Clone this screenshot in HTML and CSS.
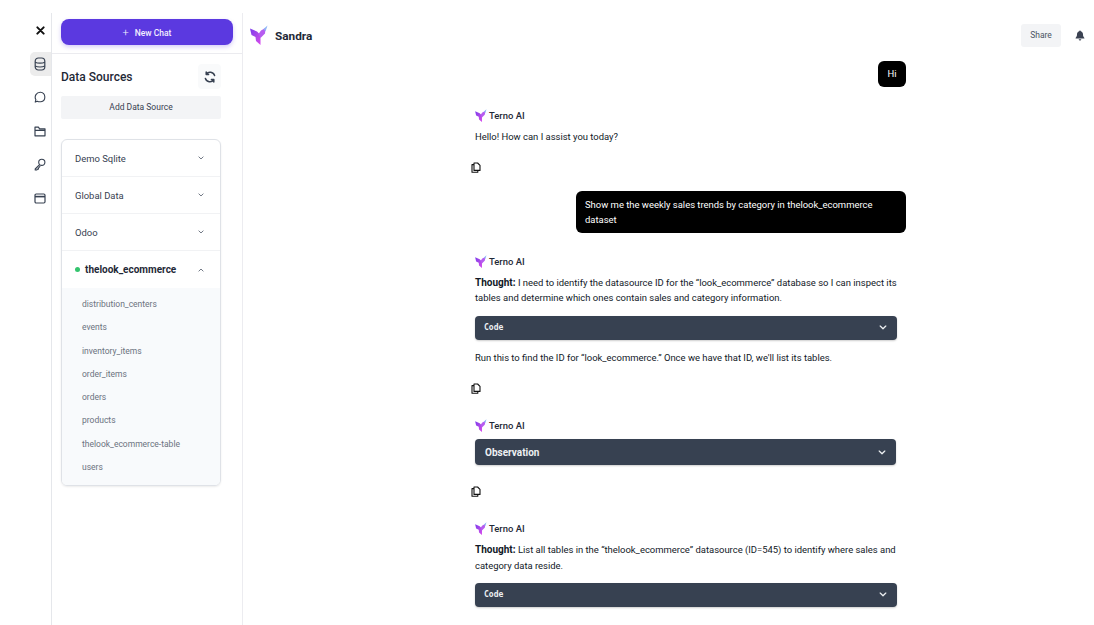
FILE: index.html
```html
<!DOCTYPE html>
<html lang="en">
<head>
<meta charset="utf-8">
<title>Terno AI</title>
<link rel="stylesheet" href="styles.css">
</head>
<body>
<svg class="defs" width="0" height="0" aria-hidden="true">
  <defs>
    <linearGradient id="lg" x1="0" y1="0" x2="1" y2="1">
      <stop offset="0" stop-color="#7c3aed"/>
      <stop offset="0.6" stop-color="#b14be8"/>
      <stop offset="1" stop-color="#d946ef"/>
    </linearGradient>
    <symbol id="logo" viewBox="0 0 18 20">
      <path d="M0 3.500 L7 6.500 L10.500 10 L10.500 20 L6 16 L5.500 12 L1.500 10 Z" fill="url(#lg)"/>
      <path d="M8.500 9 L11 5.500 L15.500 3 L15 8.500 L10.500 13 Z" fill="#b65cf0"/>
      <path d="M13.500 4 L17.500 0.500 L15.500 6.500 Z" fill="#8fb4f5"/>
    </symbol>
    <symbol id="copy" viewBox="0 0 10 11">
      <path d="M3 1h3.600L9 3.300V8.400H3Z" fill="none" stroke="#111" stroke-width="1.100" stroke-linejoin="round"/>
      <path d="M3 2.600H1V10.200H6.800V8.400" fill="none" stroke="#111" stroke-width="1.100" stroke-linejoin="round"/>
    </symbol>
    <symbol id="chev" viewBox="0 0 10 6">
      <path d="M1.500 1.200 5 4.600 8.500 1.200" fill="none" stroke="currentColor" stroke-width="1.600" stroke-linecap="round" stroke-linejoin="round"/>
    </symbol>
  </defs>
</svg>
<div class="app">
  <nav class="rail">
    <svg class="close" width="9" height="9" viewBox="0 0 10 10"><path d="M1.500 1.500 8.500 8.500M8.500 1.500 1.500 8.500" stroke="#111" stroke-width="2.200" stroke-linecap="round"/></svg>
    <div class="rail-item active">
      <svg width="12" height="14" viewBox="0 0 12 14" fill="none" stroke="#374151" stroke-width="1.200"><rect x="1.200" y="1" width="9.600" height="12" rx="3.200"/><path d="M1.200 5.200c2.400 1.300 7.200 1.300 9.600 0M1.200 9c2.400 1.300 7.200 1.300 9.600 0"/></svg>
    </div>
    <div class="rail-item">
      <svg width="12" height="13" viewBox="0 0 12 13" fill="none" stroke="#374151" stroke-width="1.100"><path d="M6.400 1.200a4.800 4.800 0 0 1 .5 9.500c-1.300.2-2.600 0-3.500-.5l-2.200.9.700-2.400A5 5 0 0 1 6.400 1.200Z" stroke-linejoin="round"/></svg>
    </div>
    <div class="rail-item">
      <svg width="12" height="11" viewBox="0 0 12 11" fill="none" stroke="#374151" stroke-width="1.200"><path d="M1 9.800V1.200h3.400l1.200 1.600H11v7H1.400ZM1 4.400h10" stroke-linejoin="round"/></svg>
    </div>
    <div class="rail-item">
      <svg width="12" height="13" viewBox="0 0 12 13" fill="none" stroke="#374151" stroke-width="1.100"><circle cx="7.800" cy="4.300" r="3.100"/><path d="M5.600 6.600 1.200 11v1h1.600l.6-.9h1l.2-1.200 1.600-1.700" stroke-linejoin="round"/></svg>
    </div>
    <div class="rail-item">
      <svg width="12" height="11" viewBox="0 0 12 11" fill="none" stroke="#374151" stroke-width="1.200"><rect x="1" y="1" width="10" height="9" rx="1.200"/><path d="M1 3.600h10" stroke-width="1.600"/></svg>
    </div>
  </nav>

  <aside class="sidebar">
    <div class="new-wrap">
      <button class="new-chat"><span class="plus">+</span>New Chat</button>
    </div>
    <div class="ds-head">
      <h2>Data Sources</h2>
      <span class="refresh">
        <svg width="12" height="12" viewBox="0 0 12 12" fill="none" stroke="#374151" stroke-width="1.500" stroke-linecap="round" stroke-linejoin="round"><path d="M10.600 4.600A4.800 4.800 0 0 0 2.200 3.200M1.400 7.400a4.800 4.800 0 0 0 8.400 1.400M2.200 1v2.400h2.400M9.800 11V8.600H7.400"/></svg>
      </span>
    </div>
    <button class="add">Add Data Source</button>
    <div class="ds-card">
      <div class="ds-row"><span>Demo Sqlite</span><svg class="chev" width="6" height="4"><use href="#chev"/></svg></div>
      <div class="ds-row"><span>Global Data</span><svg class="chev" width="6" height="4"><use href="#chev"/></svg></div>
      <div class="ds-row"><span>Odoo</span><svg class="chev" width="6" height="4"><use href="#chev"/></svg></div>
      <div class="ds-row open"><span class="dot"></span><span class="ds-name">thelook_ecommerce</span><svg class="chev up" width="6" height="4"><use href="#chev"/></svg></div>
      <ul class="tables">
        <li>distribution_centers</li>
        <li>events</li>
        <li>inventory_items</li>
        <li>order_items</li>
        <li>orders</li>
        <li>products</li>
        <li>thelook_ecommerce-table</li>
        <li>users</li>
      </ul>
    </div>
  </aside>

  <main class="main">
    <header class="top">
      <svg class="top-logo" width="18" height="20"><use href="#logo"/></svg>
      <span class="brand">Sandra</span>
      <button class="share">Share</button>
      <svg class="bell" width="10" height="11" viewBox="0 0 10 11"><path d="M5 .4c.5 0 .8.3.8.8 1.500.4 2.200 1.600 2.200 3.100 0 1.700.4 2.600 1.400 3.600v.6H.6v-.6C1.600 6.900 2 6 2 4.300c0-1.500.7-2.700 2.200-3.100 0-.5.3-.8.8-.8ZM3.700 9.300h2.600A1.300 1.300 0 0 1 3.700 9.300Z" fill="#3b4252"/></svg>
    </header>
    <section class="chat">
      <div class="user hi"><div class="bubble">Hi</div></div>

      <article class="ai first">
        <div class="who"><svg width="12" height="13"><use href="#logo"/></svg>Terno AI</div>
        <p class="one">Hello! How can I assist you today?</p>
        <svg class="copy c1" width="10" height="11"><use href="#copy"/></svg>
      </article>

      <div class="user long"><div class="bubble">Show me the weekly sales trends by category in thelook_ecommerce dataset</div></div>

      <article class="ai second">
        <div class="who"><svg width="12" height="13"><use href="#logo"/></svg>Terno AI</div>
        <p><b>Thought:</b> I need to identify the datasource ID for the “look_ecommerce” database so I can inspect its tables and determine which ones contain sales and category information.</p>
        <div class="bar"><code>Code</code><svg width="8" height="5"><use href="#chev"/></svg></div>
        <p class="after">Run this to find the ID for “look_ecommerce.” Once we have that ID, we'll list its tables.</p>
        <svg class="copy c2" width="10" height="11"><use href="#copy"/></svg>
      </article>

      <article class="ai third">
        <div class="who"><svg width="12" height="13"><use href="#logo"/></svg>Terno AI</div>
        <div class="bar obs"><span>Observation</span><svg width="8" height="5"><use href="#chev"/></svg></div>
        <svg class="copy c3" width="10" height="11"><use href="#copy"/></svg>
      </article>

      <article class="ai fourth">
        <div class="who"><svg width="12" height="13"><use href="#logo"/></svg>Terno AI</div>
        <p><b>Thought:</b> List all tables in the “thelook_ecommerce” datasource (ID=545) to identify where sales and category data reside.</p>
        <div class="bar"><code>Code</code><svg width="8" height="5"><use href="#chev"/></svg></div>
      </article>
    </section>
  </main>
</div>
</body>
</html>
```
FILE: styles.css
```css
* { box-sizing: border-box; }
html, body { margin: 0; height: 100%; overflow: hidden; background: #fff; }
body { font-family: Roboto, "Liberation Sans", sans-serif; color: #111827; font-size: 9.45px; }
button { font: inherit; border: 0; padding: 0; }
.defs { position: absolute; }

.app { display: flex; height: 625px; padding-top: 13px; }

.rail { width: 52px; flex: none; border-right: 1px solid #e5e7eb; display: flex; flex-direction: column; align-items: flex-end; }
.close { margin: 12.5px 6.5px 17.5px 0; }
.rail-item { width: 21px; height: 24px; margin-bottom: 9.6px; padding-right: 1px; border-radius: 5px 0 0 5px; display: flex; align-items: center; justify-content: center; }
.rail-item.active { background: #ececec; }

.sidebar { width: 191px; flex: none; border-right: 1px solid #ececf0; }
.new-wrap { height: 41px; padding: 6px 9px 0; border-bottom: 1px solid #ebebef; }
.new-chat { display: block; width: 172px; height: 26px; border-radius: 8px; background: #5b39e0; color: #f3efff; font-size: 8.5px; font-weight: 500; box-shadow: 0 2px 4px rgba(91, 57, 224, .25); }
.plus { font-size: 11px; font-weight: 300; margin-right: 6px; vertical-align: -0.5px; }
.ds-head { display: flex; align-items: center; justify-content: space-between; width: 160px; margin: 10px 0 7px 9px; height: 25px; }
.ds-head h2 { margin: 0; font-size: 12px; font-weight: 500; color: #1f2937; }
.refresh { width: 23px; height: 25px; border-radius: 4px; background: #f9fafb; display: flex; align-items: center; justify-content: center; }
.add { display: block; width: 160px; height: 23px; margin-left: 9px; padding-bottom: 1px; background: #f3f4f6; color: #374151; border-radius: 2px; font-size: 8.5px; }
.ds-card { width: 160px; margin: 20px 0 0 9px; border: 1px solid #dfe2e7; border-radius: 6px; box-shadow: 0 1px 2px rgba(0, 0, 0, .08); overflow: hidden; }
.ds-row { height: 37px; display: flex; align-items: center; padding: 0 16px 0 13px; border-bottom: 1px solid #f1f2f4; font-size: 9.45px; color: #374151; }
.ds-row span:first-child { flex: 1; }
.chev { color: #6b7280; }
.chev.up { transform: rotate(180deg); }
.ds-row.open { border-bottom: 0; }
.ds-row.open .dot { flex: none; width: 5px; height: 5px; border-radius: 50%; background: #34c46e; margin-right: 5px; }
.ds-name { flex: 1; font-size: 10px; font-weight: 700; color: #1f2937; }
.tables { list-style: none; margin: 0; padding: 5px 0 6px 20px; background: #f8fafc; color: #6b7280; font-size: 8.5px; }
.tables li { height: 23.3px; line-height: 23.3px; }

.main { flex: 1; min-width: 0; }
.top { height: 44px; display: flex; align-items: center; padding: 0 9px 0 7px; margin-bottom: 4px; }
.top-logo { flex: none; margin-right: 7px; }
.brand { flex: 1; font-size: 11.8px; font-weight: 700; color: #1f2937; padding-top: 1px; }
.share { width: 40px; height: 23px; background: #f3f4f6; color: #4b5563; font-size: 8.5px; border-radius: 3px; margin-right: 14px; }
.bell { flex: none; }

.chat { width: 431px; margin-left: 232px; }
.user { display: flex; justify-content: flex-end; }
.bubble { background: #000; color: #fff; border-radius: 6px; }
.hi .bubble { width: 28px; height: 26px; text-align: center; line-height: 26px; }
.long { margin-top: 18px; }
.long .bubble { width: 330px; height: 42px; padding: 6px 9px; line-height: 15px; }

.ai p { margin: 0; width: 422px; line-height: 15.6px; color: #111827; }
.ai p b { font-size: 10px; }
.who { display: flex; align-items: center; height: 14px; gap: 2px; font-weight: 500; color: #1f2937; margin-bottom: 7px; }
.first { margin-top: 21px; }
.second { margin-top: 22px; }
.second .who { margin-bottom: 6px; }
.third { margin-top: 24px; }
.fourth { margin-top: 24px; }
.copy { display: block; margin-left: -4px; }
.c1 { margin-top: 17px; }
.c2 { margin-top: 18px; }
.c3 { margin-top: 21px; }
.bar { width: 422px; height: 24px; margin-top: 10px; display: flex; align-items: center; justify-content: space-between; padding: 0 10px 0 9px; background: #374151; color: #eef0f3; border-radius: 4px; box-shadow: 0 1px 2px rgba(0, 0, 0, .2); }
.fourth .bar { margin-top: 9px; }
.bar code { font-family: "DejaVu Sans Mono", "Liberation Mono", monospace; font-size: 8px; font-weight: 700; }
.bar.obs { width: 421px; height: 26px; margin-top: 7px; font-weight: 700; font-size: 10px; padding: 0 10px; }
.ai p.after { margin-top: 10px; }
```
